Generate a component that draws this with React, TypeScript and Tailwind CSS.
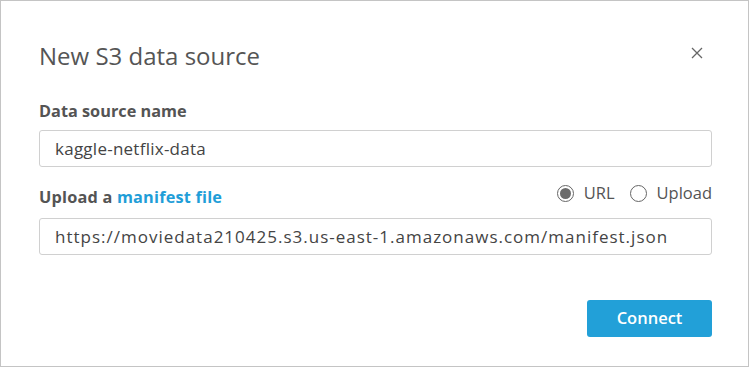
import React from 'react'

function Radio({ checked, label }: { checked: boolean; label: string }) {
  return (
    <label className="flex items-center gap-[10px]">
      <span className="flex h-[17px] w-[17px] items-center justify-center rounded-full border border-[#666] bg-white">
        {checked && <span className="h-[11px] w-[11px] rounded-full bg-[#6b6b6b]" />}
      </span>
      <span className="text-[16.5px] leading-[20px] text-[#545454]">{label}</span>
    </label>
  )
}

export default function App() {
  return (
    <div className="h-[367px] w-[750px] bg-white" style={{ fontFamily: '"Open Sans", sans-serif' }}>
      <div className="flex h-[367px] w-[749px] flex-col border border-[#c4c4c4] pl-[38px] pr-[36px]">
        <div className="flex items-start justify-between pt-[38px]">
          <h1 className="text-[24px] leading-[34px] text-[#555]">New S3 data source</h1>
          <button className="mr-[9px] mt-[8px] text-[#666]">
            <svg width="12" height="12" viewBox="0 0 12 12" fill="none" stroke="currentColor" strokeWidth="1.3">
              <path d="M1 1 L11 11 M11 1 L1 11" />
            </svg>
          </button>
        </div>

        <div className="mt-[27px] text-[16.3px] font-bold leading-[22px] text-[#545454]">Data source name</div>
        <div className="mt-[8px] flex h-[37px] items-center rounded-[3px] border border-[#d0d0d0] px-[15px] text-[17px] tracking-[0.25px] text-[#444]">
          kaggle-netflix-data
        </div>

        <div className="mt-[16px] flex items-end justify-between">
          <div className="text-[16.3px] font-bold leading-[22px] tracking-[0.2px] text-[#545454]">
            Upload a <span className="text-[#1f9ed8]">manifest file</span>
          </div>
          <div className="mb-[5px] flex items-center gap-[15px]">
            <Radio checked label="URL" />
            <Radio checked={false} label="Upload" />
          </div>
        </div>
        <div className="mt-[10px] flex h-[37px] items-center rounded-[3px] border border-[#d0d0d0] px-[15px] text-[17px] tracking-[1px] text-[#444]">
          https://moviedata210425.s3.us-east-1.amazonaws.com/manifest.json
        </div>

        <div className="mt-[45px] flex justify-end">
          <button className="h-[37px] w-[125px] rounded-[3px] bg-[#22a0d8] text-[16.5px] font-semibold text-white">
            Connect
          </button>
        </div>
      </div>
    </div>
  )
}
